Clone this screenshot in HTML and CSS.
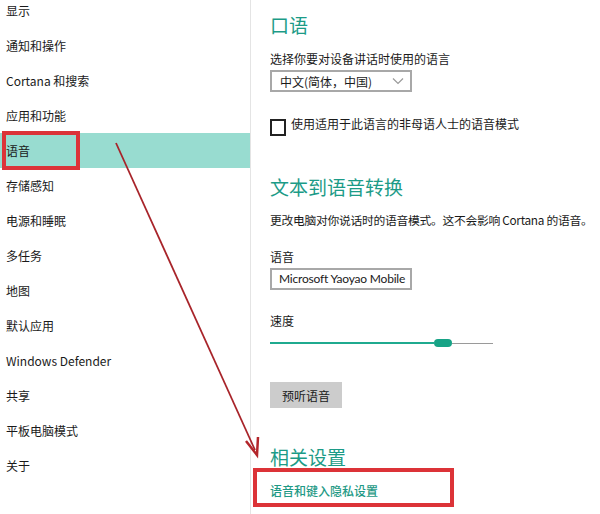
FILE: index.html
```html
<!DOCTYPE html>
<html lang="zh-CN">
<head>
<meta charset="utf-8">
<title>语音设置</title>
<link rel="stylesheet" href="styles.css">
</head>
<body>
<div class="page">
  <nav class="nav">
    <div class="nav-item">显示</div>
    <div class="nav-item">通知和操作</div>
    <div class="nav-item">Cortana 和搜索</div>
    <div class="nav-item">应用和功能</div>
    <div class="nav-item selected">语音</div>
    <div class="nav-item">存储感知</div>
    <div class="nav-item">电源和睡眠</div>
    <div class="nav-item">多任务</div>
    <div class="nav-item">地图</div>
    <div class="nav-item">默认应用</div>
    <div class="nav-item">Windows Defender</div>
    <div class="nav-item">共享</div>
    <div class="nav-item">平板电脑模式</div>
    <div class="nav-item">关于</div>
  </nav>
  <main class="main">
    <h2 class="heading">口语</h2>
    <div class="label">选择你要对设备讲话时使用的语言</div>
    <div class="select">
      <span>中文(简体，中国)</span>
      <svg class="chev" width="12" height="8" viewBox="0 0 12 8"><path d="M1 1.5 L6 6.5 L11 1.5" fill="none" stroke="#9a9a9a" stroke-width="1.2"/></svg>
    </div>
    <div class="check-row">
      <span class="checkbox"></span>
      <span class="check-label">使用适用于此语言的非母语人士的语音模式</span>
    </div>
    <h2 class="heading h2">文本到语音转换</h2>
    <div class="desc">更改电脑对你说话时的语音模式。这不会影响 Cortana 的语音。</div>
    <div class="label label-voice">语音</div>
    <div class="input">Microsoft Yaoyao Mobile</div>
    <div class="label label-speed">速度</div>
    <div class="slider">
      <div class="fill"></div>
      <div class="thumb"></div>
      <div class="rest"></div>
    </div>
    <div class="button">预听语音</div>
    <h2 class="heading h3">相关设置</h2>
    <div class="link">语音和键入隐私设置</div>
  </main>
  <svg class="arrow" width="600" height="514" viewBox="0 0 600 514">
    <line x1="116" y1="143" x2="255" y2="450" stroke="#a8242a" stroke-width="1.8"/>
    <path d="M246 441 L257 455 L258 437" fill="none" stroke="#b3262b" stroke-width="2.5" stroke-linejoin="miter"/>
  </svg>
</div>
</body>
</html>
```
FILE: styles.css
```css
html, body {
  margin: 0;
  padding: 0;
  background: #fff;
}
body {
  font-family: "Noto Sans CJK SC", "Noto Sans", sans-serif;
  color: #1a1a1a;
  font-size: 12px;
}
.page {
  position: relative;
  width: 600px;
  height: 514px;
  overflow: hidden;
  display: flex;
}
.nav {
  width: 250px;
  flex: none;
  margin-top: -7px;
  display: flex;
  flex-direction: column;
}
.nav-item {
  height: 35px;
  display: flex;
  align-items: center;
  padding-left: 6px;
  font-size: 12px;
  line-height: 1;
  color: #1a1a1a;
  padding-top: 1px;
  box-sizing: border-box;
}
.nav-item.selected {
  background: #98dcd0;
  position: relative;
}
.nav-item.selected::after {
  content: "";
  position: absolute;
  left: 2px;
  top: -2px;
  width: 78px;
  height: 39px;
  border: 4px solid #dc3338;
  box-sizing: border-box;
}
.main {
  flex: 1;
  min-width: 0;
  border-left: 1px solid #e4e4e4;
  padding: 12px 0 0 19px;
  display: flex;
  flex-direction: column;
  align-items: flex-start;
  position: relative;
}
.heading {
  margin: 0;
  font-size: 19px;
  line-height: 26px;
  font-weight: normal;
  color: #1c9b87;
}
.h2 { margin-top: 38px; }
.h3 { margin-top: 36px; }
.label {
  margin-top: 12px;
  line-height: 18px;
  font-size: 12px;
}
.label-voice { margin-top: 19px; }
.label-speed { margin-top: 22px; }
.select {
  margin-top: 2px;
  width: 142px;
  height: 22px;
  border: 2px solid #a8a8a8;
  box-sizing: border-box;
  display: flex;
  align-items: center;
  justify-content: space-between;
  padding: 0 6px 0 8px;
  font-size: 12px;
}
.chev { display: block; }
.check-row {
  margin-top: 24px;
  display: flex;
  align-items: flex-start;
  gap: 5px;
}
.checkbox {
  width: 16px;
  height: 17px;
  border: 2px solid #222;
  box-sizing: border-box;
  margin-top: 3px;
}
.check-label {
  font-size: 12px;
  line-height: 16px;
}
.desc {
  margin-top: 11px;
  line-height: 18px;
  white-space: nowrap;
  font-size: 11.8px;
  letter-spacing: -0.3px;
}
.input {
  margin-top: 2px;
  width: 142px;
  height: 22px;
  border: 2px solid #a8a8a8;
  box-sizing: border-box;
  padding-left: 7px;
  font-family: Lato, "Noto Sans", sans-serif;
  font-size: 12px;
  letter-spacing: -0.2px;
  line-height: 18px;
  white-space: nowrap;
  overflow: hidden;
}
.slider {
  margin-top: 8px;
  width: 223px;
  height: 10px;
  display: flex;
  align-items: center;
}
.fill {
  width: 164px;
  height: 2px;
  background: #1faa8f;
}
.thumb {
  width: 18px;
  height: 8px;
  border-radius: 4px;
  background: #17a386;
}
.rest {
  flex: 1;
  height: 1px;
  background: #9a9a9a;
}
.button {
  margin-top: 34px;
  width: 72px;
  height: 26px;
  background: #cccccc;
  display: flex;
  align-items: center;
  justify-content: center;
  font-size: 12px;
}
.link {
  margin-top: 12px;
  position: relative;
  line-height: 18px;
  font-size: 12px;
  color: #1f9a86;
  font-weight: 500;
}
.link::after {
  content: "";
  position: absolute;
  left: -17px;
  top: -14px;
  width: 201px;
  height: 39px;
  border: 4px solid #dc3338;
  box-sizing: border-box;
}
.arrow {
  position: absolute;
  left: 0;
  top: 0;
  pointer-events: none;
}
```
